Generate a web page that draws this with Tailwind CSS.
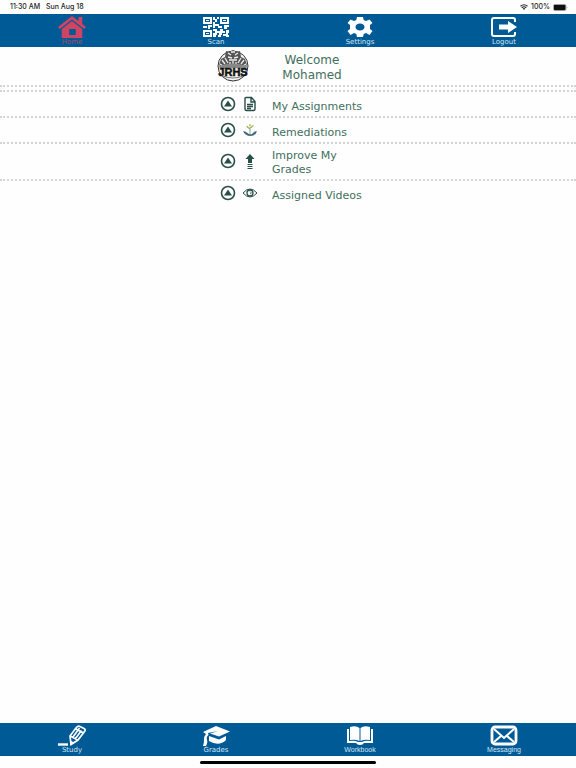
<!DOCTYPE html>
<html lang="en">
<head>
<meta charset="utf-8">
<meta name="viewport" content="width=device-width, initial-scale=1">
<title>Student Home</title>
<script src="https://cdn.jsdelivr.net/npm/@tailwindcss/browser@4"></script>
</head>
<body class="flex min-h-screen flex-col bg-[#fefefe] font-['DejaVu_Sans',sans-serif] text-[#426f5c]">

<!-- Device status bar -->
<div class="flex h-[14px] items-center justify-between pr-2 pl-[10px] font-['Inter',sans-serif] text-[7px] leading-[14px] font-medium text-[#222]">
  <div class="flex gap-[6px]"><span>11:30 AM</span><span>Sun Aug 18</span></div>
  <div class="flex items-center gap-[3px]">
    <svg class="h-[6px] w-[8px]" viewBox="0 0 16 12" fill="none" stroke="#222" stroke-width="2.2" aria-hidden="true"><path d="M1 4.5Q8-1.5 15 4.5M3.5 7.5Q8 3.5 12.500 7.5"/><path d="M5.500 9Q8 7 10.500 9L8 12Z" fill="#222" stroke="none"/></svg>
    <span>100%</span>
    <svg class="h-[7px] w-[15px]" viewBox="0 0 28 13" aria-hidden="true"><rect x=".5" y=".5" width="24" height="12" rx="3" fill="none" stroke="#888"/><rect x="1.500" y="1.500" width="22" height="10" rx="2" fill="#111"/><path d="M26 4.500q2 2 0 4z" fill="#888"/></svg>
  </div>
</div>

<nav aria-label="Main" class="grid h-[33px] grid-cols-4 bg-[#005a96] text-[7px] leading-[8px] text-[#d5e6f3]">
  <a href="#home" class="flex flex-col items-center pt-[2px] text-[#a04a72]">
    <svg class="h-[22px] w-[28px]" viewBox="0 0 30 22" preserveAspectRatio="none" fill="#cf4363" aria-hidden="true"><path d="M15 0 22 5V1h4v7l4 3-2 2L15 3.500 2 13 0 11Z"/><path fill-rule="evenodd" d="M15 5 26 13v9H4V13ZM12 13v6h7v-6Z"/></svg>
    <span>Home</span>
  </a>
  <a href="#scan" class="flex flex-col items-center pt-[2px]">
    <svg class="h-[22px] w-[28px]" viewBox="0 0 28 22" fill="#fff" aria-hidden="true"><path fill-rule="evenodd" d="M1 1h9v7H1ZM3 3v3h5V3ZM18 1h9v7h-9ZM20 3v3h5V3ZM1 14h9v7H1ZM3 16v3h5v-3Z"/><path d="M4 4h3v1H4ZM21 4h3v1h-3ZM4 17h3v1H4ZM11 1h2v2h-2ZM15 1h2v2h-2v3h-2V4h-2V3h4ZM11 6h2v2h4v2h3v2h-4v-2h-3v2h-2ZM1 10h4v2H1ZM6 9h4v2H8v2H6ZM22 9h5v2h-2v2h-3ZM11 13h4v2h3v-2h3v2h2v2h-3v2h-3v-2h-2v2h-4v-2h2v-2h-2ZM24 14h3v3h-3ZM11 19h3v2h-3ZM16 19h3v2h-3ZM21 18h3v-1h2v2h1v2h-3v-1h-3Z"/></svg>
    <span>Scan</span>
  </a>
  <a href="#settings" class="flex flex-col items-center pt-[2px]">
    <svg class="h-[22px] w-[28px]" viewBox="0 0 28 22" fill="#fff" aria-hidden="true"><path fill-rule="evenodd" d="M11 1h6l.7 3 2.300 1 3.500-1.500 3 3.500L24 9v4l2.500 2-3 4L20 17l-2.300 1-.7 3h-6l-.7-3L8 17l-3.500 2-3-4L4 13V9L1.500 7l3-3.500L8 5l2.300-1ZM14 7.500c-2.600 0-4.500 1.500-4.500 3.500s1.900 3.500 4.500 3.500 4.500-1.500 4.500-3.500-1.900-3.500-4.500-3.500Z"/></svg>
    <span>Settings</span>
  </a>
  <a href="#logout" class="flex flex-col items-center pt-[2px]">
    <svg class="h-[22px] w-[28px]" viewBox="0 0 28 22" fill="none" stroke="#fff" stroke-width="2" aria-hidden="true"><path d="M25 6V4q0-2-2-2H4Q2 2 2 4v14q0 2 2 2h19q2 0 2-2v-2"/><path d="M9 8.500h9V5l9 6-9 6v-3.500H9Z" fill="#fff" stroke="none"/></svg>
    <span>Logout</span>
  </a>
</nav>

<main class="flex-1">
  <header class="flex h-[40px] justify-center border-b-2 border-dotted border-[#d4d4d4]">
    <div class="flex w-[142px] items-start">
      <svg class="mt-[2px] h-[33px] w-[32px] shrink-0" viewBox="0 0 32 33" role="img" aria-label="JRHS school logo">
        <circle cx="16" cy="17" r="15" fill="#f4f4f4" stroke="#333"/>
        <path d="M9 2l3 1 4-2 4 2 3-1 1 6 4 2 2 6-3 3-4-2-3 1-4-2-4 2-3-1-4 2-3-3 2-6 4-2Z" fill="#555"/>
        <path d="M11 4l3 2M21 4l-3 2M14 3h4M11 8l4 1M21 8l-4 1M12 11h8M5 11l3 4M8 9l3 5M27 11l-3 4M24 9l-3 5M13 13v3M16 12v4M19 13v3M3 15l3 2M29 15l-3 2" stroke="#eee" stroke-width="1.300"/>
        <path d="M2 17q14-5 28 0l-1 4q-13-4-26 0Z" fill="#888"/>
        <path d="M6 27q10 4 20 0" fill="none" stroke="#777"/>
        <text x="16" y="27" text-anchor="middle" font-family="Liberation Sans, sans-serif" font-size="11" font-weight="700" fill="#111" stroke="#111" stroke-width=".5">JRHS</text>
      </svg>
      <h1 class="flex-1 pt-[6px] pl-[16px] text-center text-[12px] leading-[15px]">Welcome Mohamed</h1>
    </div>
  </header>

  <ul class="mt-[3px] border-t-2 border-dotted border-[#d4d4d4] text-[11px] leading-[14px]">
    <li class="border-b-2 border-dotted border-[#d4d4d4]">
      <a href="#assignments" class="mx-auto flex w-[136px] items-center pt-[5px] pb-[2px]">
        <svg class="-mt-[4px] h-[16px] w-[16px] shrink-0" viewBox="0 0 16 16" aria-hidden="true"><circle cx="8" cy="8" r="6.500" fill="none" stroke="#294f49" stroke-width="1.600"/><path d="m8 4.500 4 6H4Z" fill="#294f49"/></svg>
        <svg class="-mt-[4px] ml-[6px] h-[16px] w-[16px] shrink-0" viewBox="0 0 16 16" fill="none" stroke="#294f49" stroke-width="1.400" aria-hidden="true"><path d="M4 1.500h5.500l3.500 4V13q0 1.500-1.500 1.500h-7Q3 14.500 3 13V2.500q0-1 1-1ZM9 2v4h4M5 8.500h6M5 10.500h6M5 12.500h4"/></svg>
        <span class="mr-[-8px] ml-[14px] pt-[3px] whitespace-nowrap">My Assignments</span>
      </a>
    </li>
    <li class="border-b-2 border-dotted border-[#d4d4d4]">
      <a href="#remediations" class="mx-auto flex w-[136px] items-center pt-[5px] pb-[2px]">
        <svg class="-mt-[4px] h-[16px] w-[16px] shrink-0" viewBox="0 0 16 16" aria-hidden="true"><circle cx="8" cy="8" r="6.500" fill="none" stroke="#294f49" stroke-width="1.600"/><path d="m8 4.500 4 6H4Z" fill="#294f49"/></svg>
        <svg class="-mt-[4px] ml-[6px] h-[16px] w-[16px] shrink-0" viewBox="0 0 16 16" fill="none" aria-hidden="true"><path d="M8 12V5M8 7 5 5M8 6l3-2" stroke="#86a978"/><path d="M7 3q1-2 2 0l-1 2ZM4 4q2-1 3 2-2 0-3-2ZM12 3q-3 0-3 3 2 0 3-3" fill="#a9bd5f"/><path d="M1 9q3 0 6 3 1 1 3 0 2-3 5-3-1 5-7 5-5 0-7-5Z" fill="#66899d"/><path d="M2 10q3 2 5 3h3l4-3" stroke="#315068"/></svg>
        <span class="mr-[-8px] ml-[14px] pt-[3px] whitespace-nowrap">Remediations</span>
      </a>
    </li>
    <li class="border-b-2 border-dotted border-[#d4d4d4]">
      <a href="#improve" class="mx-auto flex w-[136px] items-center pt-[5px] pb-[2px]">
        <svg class="-mt-[4px] h-[16px] w-[16px] shrink-0" viewBox="0 0 16 16" aria-hidden="true"><circle cx="8" cy="8" r="6.500" fill="none" stroke="#294f49" stroke-width="1.600"/><path d="m8 4.500 4 6H4Z" fill="#294f49"/></svg>
        <svg class="-mt-[4px] ml-[6px] h-[16px] w-[16px] shrink-0" viewBox="0 0 16 16" fill="#294f49" aria-hidden="true"><path d="m8 1 4.500 5H10v4H6V6H3.500ZM5.500 11h5v1h-5ZM5.500 13h5v1h-5ZM5.500 15h5v1h-5Z"/></svg>
        <span class="ml-[14px]">Improve My Grades</span>
      </a>
    </li>
    <li>
      <a href="#videos" class="mx-auto flex w-[136px] items-center pt-[5px] pb-[2px]">
        <svg class="-mt-[4px] h-[16px] w-[16px] shrink-0" viewBox="0 0 16 16" aria-hidden="true"><circle cx="8" cy="8" r="6.500" fill="none" stroke="#294f49" stroke-width="1.600"/><path d="m8 4.500 4 6H4Z" fill="#294f49"/></svg>
        <svg class="-mt-[4px] ml-[6px] h-[16px] w-[16px] shrink-0" viewBox="0 0 16 16" fill="none" stroke="#294f49" aria-hidden="true"><path d="M1 8q7-8 14 0-7 8-14 0Z"/><circle cx="8" cy="8" r="3" stroke-width="1.300"/><path d="M8 6.500 9.500 8 8 9" stroke-width=".8"/></svg>
        <span class="mr-[-8px] ml-[14px] pt-[3px] whitespace-nowrap">Assigned Videos</span>
      </a>
    </li>
  </ul>
</main>

<nav aria-label="Tools" class="grid h-[33px] grid-cols-4 bg-[#005a96] text-[7px] leading-[8px] text-[#d5e6f3]">
  <a href="#study" class="flex flex-col items-center pt-[2px]">
    <svg class="h-[21px] w-[28px]" viewBox="0 0 28 21" fill="none" stroke="#fff" stroke-width="1.700" aria-hidden="true"><path d="M0 19.500h10" stroke-width="2.400"/><path d="m12 11 6-8q2-2.500 4-1.500l4 2q2 1 .5 3L20 15l-7 4.500ZM18 4l7.500 4M12 11l8 4M15 12l6.500-9M17.500 13.500l6-8"/><path d="m12 15.500 4.500 2-4 2.500Z" fill="#fff" stroke="none"/></svg>
    <span>Study</span>
  </a>
  <a href="#grades" class="flex flex-col items-center pt-[2px]">
    <svg class="h-[21px] w-[28px]" viewBox="0 0 28 21" fill="#fff" aria-hidden="true"><path d="M14 1 28 6.500l-11 5L8 8.500l8-2.500-10 2 .5 2Q4 12 5 15q1 2-1 6H1q1-3 1-6 0-4 2-6L1 7Z"/><path d="m7 11 10 3.500 7-3.500v4q-7 7-17 1Z"/></svg>
    <span>Grades</span>
  </a>
  <a href="#workbook" class="flex flex-col items-center pt-[2px] font-['Liberation_Sans',sans-serif]">
    <svg class="h-[21px] w-[28px]" viewBox="0 0 28 21" fill="#fff" aria-hidden="true"><path d="M4 2q6-2 9.500 1v13q-4-2-9.500-1ZM14.500 3q3.500-3 9.500-1v13q-5.500-1-9.500 1Z"/><path d="M1 4h2v12q6-1 9 1h4q3-2 9-1V4h2v14h-9q-1 2-4 2t-4-2H1Z"/></svg>
    <span>Workbook</span>
  </a>
  <a href="#messaging" class="flex flex-col items-center pt-[2px] font-['Liberation_Sans',sans-serif]">
    <svg class="h-[21px] w-[28px]" viewBox="0 0 28 21" fill="none" stroke="#fff" stroke-width="2" aria-hidden="true"><rect x="2" y="2" width="24" height="17" rx="3" stroke-width="2.800"/><path d="m4 4 10 9L24 4M4 17l7-6M24 17l-7-6"/></svg>
    <span>Messaging</span>
  </a>
</nav>
<div class="flex h-[12px] items-center justify-center"><div class="h-[3px] w-[176px] rounded-full bg-black"></div></div>
</body>
</html>
